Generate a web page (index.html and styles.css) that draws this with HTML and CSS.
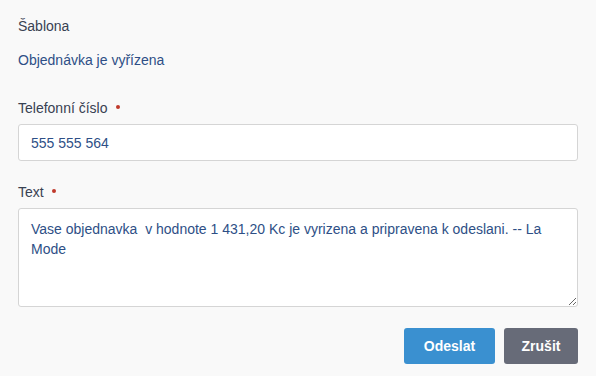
FILE: index.html
```html
<!DOCTYPE html>
<html lang="cs">
<head>
    <meta charset="UTF-8">
    <title>Odeslat SMS</title>
    <link rel="stylesheet" href="styles.css">
</head>
<body>
    <form class="sms-form">
        <div class="field field-static">
            <div class="label">Šablona</div>
            <div class="value">Objednávka je vyřízena</div>
        </div>

        <div class="field">
            <label class="label required" for="phone">Telefonní číslo</label>
            <input class="control" id="phone" type="text" value="555 555 564">
        </div>

        <div class="field">
            <label class="label required" for="text">Text</label>
            <textarea class="control control-area" id="text">Vase objednavka  v hodnote 1 431,20 Kc je vyrizena a pripravena k odeslani. -- La Mode</textarea>
        </div>

        <div class="actions">
            <button type="button" class="btn btn-primary">Odeslat</button>
            <button type="button" class="btn btn-secondary">Zrušit</button>
        </div>
    </form>
</body>
</html>
```

FILE: styles.css
```css
* {
    margin: 0;
    padding: 0;
    box-sizing: border-box;
}
body {
    background: #f9f9f9;
    font-family: "Liberation Sans", Arial, sans-serif;
    font-size: 14px;
    line-height: 20px;
    color: #384152;
    padding: 16px 18px;
}
.sms-form {
    display: flex;
    flex-direction: column;
}
.field {
    display: flex;
    flex-direction: column;
    margin-bottom: 21px;
}
.field-static {
    gap: 14px;
    margin-bottom: 28px;
}
.label {
    display: block;
    color: #384152;
}
.field .label.required {
    margin-bottom: 6px;
}
.required::after {
    content: "";
    display: inline-block;
    width: 4px;
    height: 4px;
    border-radius: 50%;
    background: #c0392b;
    margin-left: 8px;
    vertical-align: 4px;
}
.value {
    color: #2e4f86;
}
.control {
    display: block;
    width: 100%;
    height: 37px;
    padding: 0 12px;
    border: 1px solid #d5d5d5;
    border-radius: 3px;
    background: #fff;
    font-family: inherit;
    font-size: 14px;
    line-height: 20px;
    color: #2e4f86;
}
.control-area {
    height: 99px;
    padding: 10px 12px;
    resize: vertical;
}
.actions {
    display: flex;
    justify-content: flex-end;
    gap: 9px;
}
.btn {
    height: 36px;
    border: none;
    border-radius: 3px;
    color: #fff;
    font-family: inherit;
    font-size: 14px;
    font-weight: bold;
}
.btn-primary {
    width: 91px;
    background: #3a90d0;
}
.btn-secondary {
    width: 74px;
    background: #676b78;
}
```
